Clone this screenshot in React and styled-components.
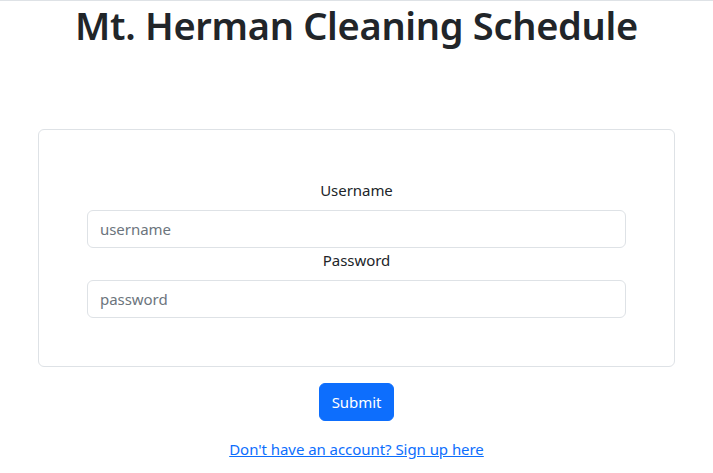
import React from "react"
import styled, { createGlobalStyle } from "styled-components"

const GlobalStyle = createGlobalStyle`
  * { box-sizing: border-box; }
  body {
    margin: 0;
    font-family: "Noto Sans", "Open Sans", sans-serif;
    font-size: 15px;
    line-height: 24px;
    letter-spacing: -0.05px;
    color: #212529;
    background: #fff;
  }
`

const Page = styled.div`
  border-top: 1px solid #dee2e6;
  text-align: center;
`

const Title = styled.h1`
  margin: 0 0 80px;
  font-size: 38px;
  font-weight: 600;
  line-height: 48px;
  letter-spacing: -0.3px;
`

const Card = styled.form`
  margin: 0 38px;
  padding: 48px;
  border: 1px solid #dee2e6;
  border-radius: 6px;
  text-align: center;
`

const Label = styled.label`
  display: block;
  margin-bottom: 8px;
`

const Input = styled.input`
  display: block;
  width: 100%;
  height: 38px;
  padding: 6px 12px;
  font: inherit;
  letter-spacing: inherit;
  color: #212529;
  border: 1px solid #dee2e6;
  border-radius: 6px;
  outline: none;

  &::placeholder {
    color: #6c757d;
  }
`

const SubmitButton = styled.button`
  margin-top: 16px;
  height: 38px;
  padding: 6px 12px;
  font: inherit;
  letter-spacing: inherit;
  color: #fff;
  background: #0d6efd;
  border: 1px solid #0d6efd;
  border-radius: 6px;
  cursor: pointer;
`

const SignUpLink = styled.a`
  display: inline-block;
  margin-top: 16px;
  color: #0d6efd;
  text-decoration: underline;
`

const App = () => {
  return (
    <>
      <GlobalStyle />
      <Page>
        <Title>Mt. Herman Cleaning Schedule</Title>
        <Card onSubmit={(e) => e.preventDefault()}>
          <Label htmlFor="username">Username</Label>
          <Input id="username" placeholder="username" />
          <Label htmlFor="password">Password</Label>
          <Input id="password" type="password" placeholder="password" />
        </Card>
        <SubmitButton type="button">Submit</SubmitButton>
        <div>
          <SignUpLink href="#">Don't have an account? Sign up here</SignUpLink>
        </div>
      </Page>
    </>
  )
}

export default App
